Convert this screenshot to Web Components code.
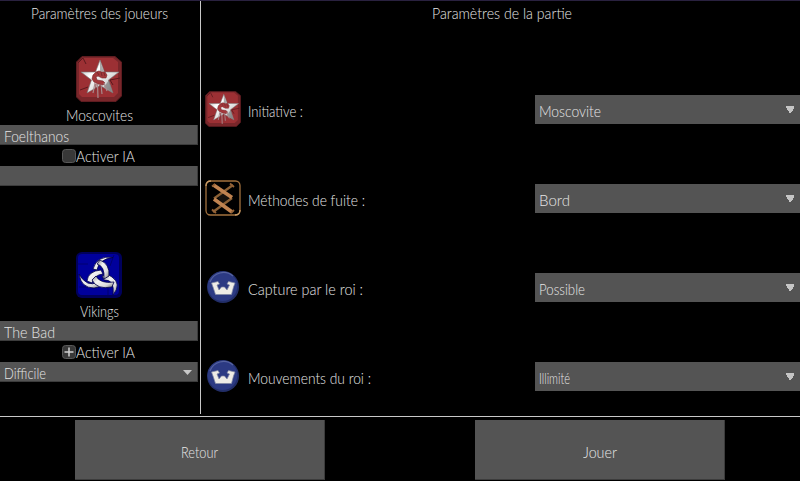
<!DOCTYPE html>
<html lang="fr"><head><meta charset="utf-8"><title>Paramètres</title>
<style>
html,body{margin:0;background:#000;height:100%;overflow:hidden}
body{font:300 16px/20px Lato,"Liberation Sans",sans-serif;color:#e6e6e6}
</style></head><body>
<game-settings></game-settings>
<script>
const define=(name,html,setup)=>customElements.define(name,class extends HTMLElement{
  connectedCallback(){
    if(this.shadowRoot)return;
    this.attachShadow({mode:'open'}).innerHTML=html;
    if(setup)setup.call(this,this.shadowRoot);
  }
});

/* A label condensed so that it spans the width in its "w" attribute. */
define('fit-label',`<style>:host{display:block;white-space:pre;flex:none;height:20px;line-height:20px}span{display:inline-block;transform-origin:0 0}</style><span><slot></slot></span>`,function(r){
  const s=r.querySelector('span'),w=+this.getAttribute('w'),n=this.textContent.length;
  this.style.width=w+'px';
  const full=s.getBoundingClientRect().width,k=Math.min(1,w/full);
  s.style.letterSpacing=(w/k-full)/n+'px';
  s.style.transform='scaleX('+k+')';
});

const crests={
star:`<svg viewBox="0 0 46 46"><defs><linearGradient id="m" x1="0" y1="0" x2="1" y2="1"><stop offset="0" stop-color="#8e8e8e"/><stop offset=".35" stop-color="#fff"/><stop offset=".65" stop-color="#ddd"/><stop offset="1" stop-color="#888"/></linearGradient></defs>
<path d="M6 .5H39L45.500 6V40L40 45.500H5L.5 41V6Z" fill="#79262a" stroke="#5e1c20"/><path d="M7 2H37L42 6V37L38 41H6L3 38V6Z" fill="#9c3034"/>
<path d="M2 7L7 2L10 8M34 24L44 22M34 24L37 29M4 34L12 31" fill="none" stroke="#5b191d" stroke-width="1"/>
<path d="M24 4L28.500 16L43 16L32.500 24L37 37L24 29.500L11 37L15.500 24L5 16L19.500 16Z" fill="url(#m)" stroke="#777" stroke-width=".6"/><path d="M24 5V15L28 16ZM33 24L36 36L28 31Z" fill="#666" opacity=".55"/>
<path d="M17 19L20 16L23 15L26 16L29 16L31 19L30 22L26 22L22 20L20 21L21 24L27 25L29 27L27 29L22 28L18 26L16 23Z" fill="#a3383b" stroke="#772528" stroke-width=".6"/>
<path d="M21 16L23 19M25 16L26 20M28 17L29 20" stroke="#6c2529" stroke-width=".8"/><path d="M19 27L17 37M21.500 28L22 42M25 29L26 38M28 27L31 35" stroke="#a88b8d" stroke-width="1.200"/><path d="M20 28L19.500 38M24 29V39" stroke="#853237" stroke-width="1"/></svg>`,
horns:`<svg viewBox="0 0 46 46"><defs><linearGradient id="h" x1="0" y1="0" x2="1" y2="1"><stop offset="0" stop-color="#8a8a8a"/><stop offset=".35" stop-color="#f4f4f4"/><stop offset=".7" stop-color="#ddd"/><stop offset="1" stop-color="#777"/></linearGradient></defs>
<rect width="46" height="46" rx="6" fill="#00005c"/><rect x="2" y="2" width="41" height="41" rx="4" fill="#00009c"/><path d="M2 12H12M32 43V32M38 3L34 14M3 35H12" stroke="#000070"/>
<g stroke="#000048" stroke-width=".8" fill="url(#h)">
<path d="M37 5.500Q21 3 17 17L21 18Q23 7 37 5.500Z"/><path d="M3 22Q5 36 18 36Q23 36 26 32L22 30Q11 36 3 22Z"/><path d="M37 43Q46 32 36 25Q31 21 26 24L28 28Q39 27 37 43Z"/>
<path d="M24 8Q34 12 33 24L28 27Q29 14 21 12Z"/>
<path d="M11 29Q12 19 25 18L27 22Q18 23 16 31Z"/><path d="M20 24Q24 32 38 30L36 35Q21 38 16 28Z"/></g></svg>`,
rune:`<svg viewBox="0 0 36 36"><rect x="1" y="1" width="34" height="34" rx="4.500" fill="none" stroke="#a2713e" stroke-width="1.300"/><path d="M1 6Q1 1 6 1M30 35Q35 35 35 30" stroke="#c79a65" stroke-width="1.300" fill="none"/>
<path d="M13 18L18 12L24 18L18 24Z" fill="#17120d"/><g fill="none"><path d="M28 5L9 18.500M27 18L8 32" stroke="#8b6035" stroke-width="2.400"/><path d="M8.500 5L27 17.500M9 19L27 32" stroke="#c08350" stroke-width="3.800"/><path d="M25 3.500L29 7M7 6.500L10 4M7 29.500L11 33M26 33L29 30" stroke="#946237" stroke-width="1.800"/></g></svg>`,
king:`<svg viewBox="0 0 36 36"><circle cx="18" cy="18" r="16" fill="#222e68"/><circle cx="17.500" cy="17.300" r="14.800" fill="#2c3a83"/><path d="M5 13A14.500 14.500 0 0 1 28 7" fill="none" stroke="#5663a0" stroke-width="1.200"/>
<path d="M6.500 14L13 12.500L14.500 15L12 16L14 21L16.500 18H19.500L22 21L24.500 16L22 15L23.500 12.500L30 14L28.500 18L26.500 25.500H10.500L8 18Z" fill="#eeece6" stroke="#8188a3" stroke-width=".7"/></svg>`};
define('crest-icon',`<style>:host{display:block;flex:none;width:var(--s,36px);height:var(--s,36px)}svg{display:block;width:100%;height:100%}</style>`,function(r){r.innerHTML+=crests[this.getAttribute('kind')]});

define('text-field',`<style>:host{display:flex;box-sizing:border-box;width:198px;height:20px;background:#545454;border:solid #3c3c3c;border-width:0 1px 1px 0;padding:1px 5px 0 4px;justify-content:space-between}
svg{display:none;width:9px;height:5px;margin-top:7px}:host([menu]) svg{display:block}</style><slot></slot><svg viewBox="0 0 9 5"><path d="M0 0H9L4.500 5Z" fill="#c8c8c8"/></svg>`);

define('check-row',`<style>:host{display:flex;height:21px;padding-left:62px;box-sizing:border-box}svg{width:14px;height:14px;margin-top:4px}.on{display:none}:host([checked]) .on{display:block}slot{display:block;margin-top:1px}</style>
<svg viewBox="0 0 14 14"><rect x=".5" y=".5" width="13" height="13" rx="3" fill="#383838" stroke="#585858"/><path class="on" d="M7 2.500V11.500M2.500 7H11.500" stroke="#d0d0d0" stroke-width="1.500"/></svg><slot></slot>`);

define('player-card',`<style>:host{display:block;height:196px}.head{display:flex;flex-direction:column;align-items:center;height:69px;width:198px;--s:46px}.name{display:block;margin-top:3px}</style>
<div class="head"><slot name="icon"></slot><span class="name"><slot name="name"></slot></span></div><slot></slot>`);

define('drop-select',`<style>:host{display:flex;box-sizing:border-box;width:265px;height:29px;background:#545454;padding:6px 6px 0 4px;justify-content:space-between}svg{width:8px;height:8px;margin-top:5px}</style>
<slot></slot><svg viewBox="0 0 8 8" shape-rendering="crispEdges"><path d="M0 0H8V2L7 3V4L5 6V7H3V6L1 4V3L0 2Z" fill="#c5c5c5"/></svg>`);

define('option-row',`<style>:host{display:grid;grid-template-columns:36px 294px 265px;height:36px;padding-left:4px}.l{padding:10px 0 0 7px}.v{padding-top:4px}</style>
<slot name="icon"></slot><div class="l"><slot></slot></div><div class="v"><slot name="value"></slot></div>`);

define('push-button',`<style>:host{display:flex;box-sizing:border-box;width:250px;height:60px;background:#545454;border:solid #3c3c3c;border-width:0 1px 1px 0;justify-content:center;padding-top:22px}</style><slot></slot>`);

const opt=(icon,label,w,val,vw)=>`<option-row><crest-icon slot="icon" kind="${icon}"></crest-icon><fit-label w="${w}">${label}</fit-label><drop-select slot="value"><fit-label w="${vw}">${val}</fit-label></drop-select></option-row>`;
define('game-settings',`<style>
:host{display:grid;box-sizing:border-box;width:800px;height:481px;grid-template:413px 67px/200px 600px;border-top:1px solid #29213f}
.players .t{display:flex;justify-content:center;height:55px;padding-top:2px;box-sizing:border-box;width:199px}
.game{border-left:1px solid #c8c8c8}.game .t{display:flex;justify-content:center;height:90px;padding:2px 0 0 2px;box-sizing:border-box}
.opts{display:grid;row-gap:53px}
.bar{grid-column:1/3;display:flex;gap:150px;padding:3px 0 0 75px;margin-top:2px;border-top:1px solid #c8c8c8}
</style>
<div class="players"><div class="t"><fit-label w="137">Paramètres des joueurs</fit-label></div>
<player-card><crest-icon slot="icon" kind="star"></crest-icon><fit-label slot="name" w="67">Moscovites</fit-label>
<text-field><fit-label w="65">Foelthanos</fit-label></text-field><check-row><fit-label w="59">Activer IA</fit-label></check-row><text-field></text-field></player-card>
<player-card><crest-icon slot="icon" kind="horns"></crest-icon><fit-label slot="name" w="39">Vikings</fit-label>
<text-field><fit-label w="51">The Bad</fit-label></text-field><check-row checked><fit-label w="59">Activer IA</fit-label></check-row><text-field menu><fit-label w="42">Difficile</fit-label></text-field></player-card></div>
<div class="game"><div class="t"><fit-label w="140">Paramètres de la partie</fit-label></div><div class="opts">
${opt('star','Initiative :',55,'Moscovite',62)}${opt('rune','Méthodes de fuite :',117,'Bord',31)}${opt('king','Capture par le roi :',115,'Possible',46)}${opt('king','Mouvements du roi :',123,'Illimité',31)}</div></div>
<div class="bar"><push-button><fit-label w="37">Retour</fit-label></push-button><push-button><fit-label w="34">Jouer</fit-label></push-button></div>`);
</script></body></html>
